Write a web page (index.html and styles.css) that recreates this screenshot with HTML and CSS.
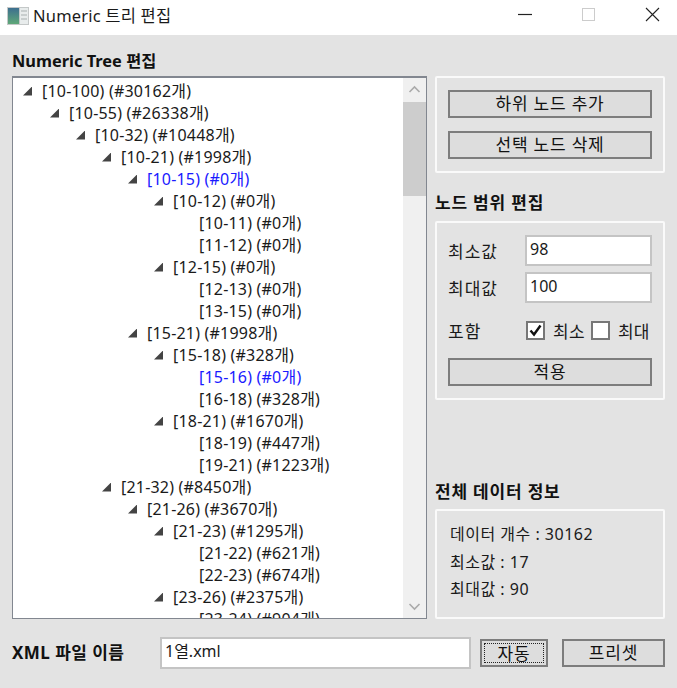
FILE: index.html
```html
<!DOCTYPE html>
<html lang="ko">
<head>
<meta charset="utf-8">
<title>Numeric 트리 편집</title>
<link rel="stylesheet" href="styles.css">
</head>
<body>
<div class="window">
  <header class="titlebar">
    <svg class="app-icon" width="22" height="18" viewBox="0 0 22 18">
      <rect width="22" height="18" fill="#c4c8c8"/>
      <defs><linearGradient id="g" x1="0" y1="0" x2="0" y2="1"><stop offset="0" stop-color="#3d6f8f"/><stop offset="1" stop-color="#5fa878"/></linearGradient></defs>
      <rect x="1" y="1" width="11" height="16" fill="url(#g)"/>
      <rect x="13" y="1" width="8" height="16" fill="#e8ecec"/>
      <path d="M14 4h6M14 8h6M14 12h6" stroke="#a8b0b0"/>
    </svg>
    <span class="title">Numeric 트리 편집</span>
    <div class="caption">
      <svg width="15" height="15" viewBox="0 0 15 15"><path d="M1 7.5h14" stroke="#222" stroke-width="1.2"/></svg>
      <svg width="15" height="15" viewBox="0 0 15 15"><rect x="1.5" y="1.5" width="12" height="12" fill="none" stroke="#ccc"/></svg>
      <svg width="15" height="15" viewBox="0 0 15 15"><path d="M1 1l13 13M14 1L1 14" stroke="#222" stroke-width="1.1"/></svg>
    </div>
  </header>
  <main class="content">
    <section class="left">
      <h2 class="heading heading-tree">Numeric Tree 편집</h2>
      <div class="tree-box">
        <ul class="tree">
          <li class="l0"><i class="tg"></i>[10-100) (#30162개)</li>
          <li class="l1"><i class="tg"></i>[10-55) (#26338개)</li>
          <li class="l2"><i class="tg"></i>[10-32) (#10448개)</li>
          <li class="l3"><i class="tg"></i>[10-21) (#1998개)</li>
          <li class="l4 blue"><i class="tg"></i>[10-15) (#0개)</li>
          <li class="l5"><i class="tg"></i>[10-12) (#0개)</li>
          <li class="l6"><i class="tg none"></i>[10-11) (#0개)</li>
          <li class="l6"><i class="tg none"></i>[11-12) (#0개)</li>
          <li class="l5"><i class="tg"></i>[12-15) (#0개)</li>
          <li class="l6"><i class="tg none"></i>[12-13) (#0개)</li>
          <li class="l6"><i class="tg none"></i>[13-15) (#0개)</li>
          <li class="l4"><i class="tg"></i>[15-21) (#1998개)</li>
          <li class="l5"><i class="tg"></i>[15-18) (#328개)</li>
          <li class="l6 blue"><i class="tg none"></i>[15-16) (#0개)</li>
          <li class="l6"><i class="tg none"></i>[16-18) (#328개)</li>
          <li class="l5"><i class="tg"></i>[18-21) (#1670개)</li>
          <li class="l6"><i class="tg none"></i>[18-19) (#447개)</li>
          <li class="l6"><i class="tg none"></i>[19-21) (#1223개)</li>
          <li class="l3"><i class="tg"></i>[21-32) (#8450개)</li>
          <li class="l4"><i class="tg"></i>[21-26) (#3670개)</li>
          <li class="l5"><i class="tg"></i>[21-23) (#1295개)</li>
          <li class="l6"><i class="tg none"></i>[21-22) (#621개)</li>
          <li class="l6"><i class="tg none"></i>[22-23) (#674개)</li>
          <li class="l5"><i class="tg"></i>[23-26) (#2375개)</li>
          <li class="l6"><i class="tg none"></i>[23-24) (#904개)</li>
        </ul>
        <div class="scrollbar">
          <svg class="arrow" width="23" height="24" viewBox="0 0 23 24"><path d="M6.5 14l5-5 5 5" fill="none" stroke="#aaa" stroke-width="1.6"/></svg>
          <div class="thumb"></div>
          <div class="track"></div>
          <svg class="arrow" width="23" height="24" viewBox="0 0 23 24"><path d="M6.5 10l5 5 5-5" fill="none" stroke="#aaa" stroke-width="1.6"/></svg>
        </div>
      </div>
    </section>
    <aside class="right">
      <div class="panel panel-actions">
        <button class="btn">하위 노드 추가</button>
        <button class="btn">선택 노드 삭제</button>
      </div>
      <h2 class="heading heading-ko heading-range">노드 범위 편집</h2>
      <div class="panel panel-range">
        <div class="field"><label>최소값</label><div class="input">98</div></div>
        <div class="field"><label>최대값</label><div class="input">100</div></div>
        <div class="include">
          <label>포함</label>
          <div class="checks">
            <span class="check on"><svg width="15" height="15" viewBox="0 0 15 15"><path d="M2.5 7.5l3.5 4 6.5-9" fill="none" stroke="#111" stroke-width="2.4"/></svg></span>
            <span class="check-label">최소</span>
            <span class="check"></span>
            <span class="check-label">최대</span>
          </div>
        </div>
        <button class="btn">적용</button>
      </div>
      <h2 class="heading heading-ko heading-info">전체 데이터 정보</h2>
      <div class="panel panel-info">
        <p>데이터 개수 : 30162</p>
        <p>최소값 : 17</p>
        <p>최대값 : 90</p>
      </div>
    </aside>
    <footer class="bottom">
      <span class="heading heading-ko file-label">XML 파일 이름</span>
      <div class="input file-input">1열.xml</div>
      <button class="btn btn-auto"><span>자동</span></button>
      <button class="btn btn-preset">프리셋</button>
    </footer>
  </main>
</div>
</body>
</html>
```
FILE: styles.css
```css
* { box-sizing: border-box; }
html, body { margin: 0; padding: 0; }
body {
  width: 677px;
  height: 688px;
  overflow: hidden;
  font-family: "Noto Sans", "Noto Sans CJK KR", sans-serif;
  font-size: 16px;
  color: #1a1a1a;
}
.window { display: flex; flex-direction: column; height: 688px; }
.titlebar {
  height: 35px;
  background: #fff;
  display: flex;
  align-items: center;
  padding-left: 7px;
  flex: none;
}
.app-icon { margin-right: 4px; margin-top: -4px; }
.title { font-size: 16.5px; margin-top: -5px; letter-spacing: .2px; }
.caption {
  margin-left: auto;
  display: flex;
  gap: 49px;
  padding-right: 17px;
  margin-top: -6px;
}
.content {
  flex: 1;
  background: #e3e3e3;
  display: grid;
  grid-template-columns: 415px 230px;
  grid-template-rows: 584px auto;
  column-gap: 8px;
  padding: 0 12px;
  align-content: start;
}
.heading {
  margin: 0;
  font-size: 16.4px;
  font-weight: 700;
  color: #111;
  line-height: 20px;
}
.heading-ko { font-size: 17px; letter-spacing: .8px; }
.heading-tree { padding: 16px 0 5px; }
.left { display: flex; flex-direction: column; min-height: 0; grid-column: 1; grid-row: 1; }
.tree-box {
  width: 415px;
  height: 543px;
  background: #fff;
  border: 1px solid #828790;
  border-top-width: 2px;
  display: flex;
  overflow: hidden;
}
.tree {
  list-style: none;
  margin: 0;
  padding: 2px 0 0;
  flex: 1;
  overflow: hidden;
  letter-spacing: .2px;
}
.tree li { height: 22px; line-height: 22px; display: flex; align-items: center; white-space: nowrap; }
.tg {
  width: 9px;
  height: 9px;
  margin-right: 10px;
  background: #444;
  clip-path: polygon(100% 0, 100% 100%, 0 100%);
  flex: none;
}
.tg.none { visibility: hidden; }
.l0 { padding-left: 10px; }
.l1 { padding-left: 37px; }
.l2 { padding-left: 63px; }
.l3 { padding-left: 89px; }
.l4 { padding-left: 115px; }
.l5 { padding-left: 141px; }
.l6 { padding-left: 167px; }
.tree .blue { color: #1a1aff; }
.scrollbar { width: 23px; background: #f0f0f0; display: flex; flex-direction: column; flex: none; }
.arrow { flex: none; }
.thumb { height: 94px; background: #cdcdcd; flex: none; }
.track { flex: 1; }
.right { display: flex; flex-direction: column; padding-top: 41px; grid-column: 2; grid-row: 1; }
.panel { border: 2px solid #fafafa; border-radius: 2px; width: 230px; }
.panel-actions { height: 97px; padding: 12px 11px; display: flex; flex-direction: column; gap: 13px; }
.btn {
  height: 28px;
  width: 204px;
  background: #dddddd;
  border: 2px solid #7d7d7d;
  font: inherit;
  font-size: 17px;
  letter-spacing: .8px;
  color: #111;
  padding: 0;
  line-height: 22px;
  flex: none;
}
.heading-range { padding-top: 20px; height: 48px; }
.panel-range { height: 179px; padding: 12px 11px; display: flex; flex-direction: column; }
.field { display: flex; align-items: center; height: 31px; margin-bottom: 6px; }
.field label { width: 77px; font-size: 17px; letter-spacing: 1px; }
.input {
  background: #fff;
  border: 2px solid #c4c4c4;
  height: 31px;
  width: 127px;
  padding: 0 3px;
  line-height: 24px;
}
.include { display: flex; align-items: center; height: 30px; margin-top: 6px; margin-bottom: 13px; }
.include label { width: 76px; flex: none; font-size: 17px; letter-spacing: 1px; }
.checks { display: flex; align-items: center; flex: none; white-space: nowrap; }
.check {
  width: 19px;
  height: 19px;
  background: #fff;
  border: 2px solid #777;
  display: flex;
  align-items: center;
  justify-content: center;
  margin-left: 2px;
  flex: none;
}
.check svg { display: block; }
.check-label { margin-left: 8px; margin-right: 5px; font-size: 17px; letter-spacing: .3px; flex: none; }
.check-label:last-child { margin-right: 0; }
.check + .check-label + .check { margin-left: 1px; }
.heading-info { margin-top: auto; padding-bottom: 7px; }
.panel-info { height: 110px; padding: 13px 13px; flex: none; }
.panel-info p { margin: 0 0 7px; line-height: 20.5px; letter-spacing: .5px; }
.bottom {
  grid-column: 1 / 3;
  grid-row: 2;
  display: flex;
  align-items: center;
  height: 32px;
  margin-top: 18px;
}
.file-label { width: 148px; letter-spacing: .45px; }
.file-input { width: 311px; height: 32px; }
.btn-auto { width: 68px; margin-left: 9px; padding: 2px; }
.btn-auto span {
  display: block;
  height: 100%;
  border: 1px dotted #222;
  line-height: 19px;
}
.btn-preset { width: 103px; margin-left: 14px; }
```
